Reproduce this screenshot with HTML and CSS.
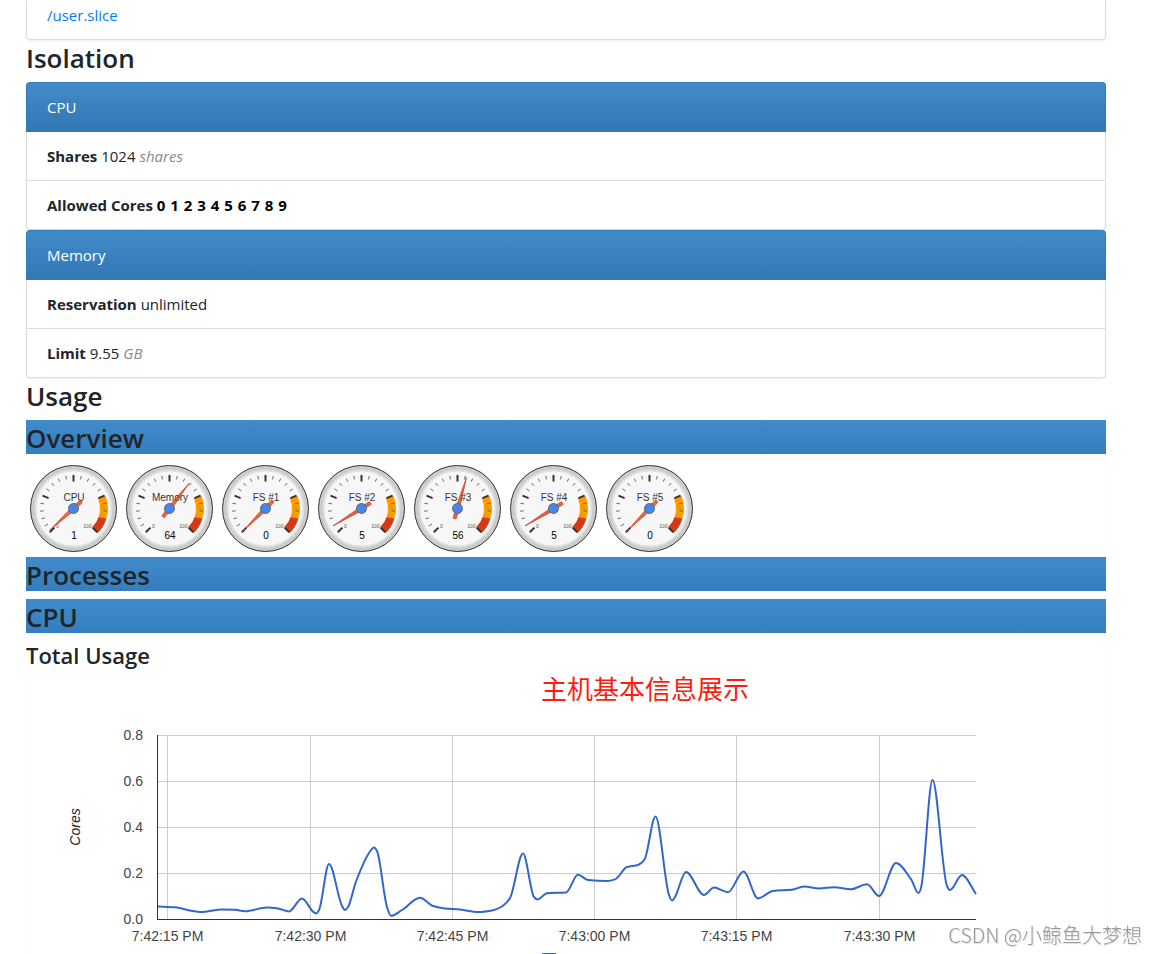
FILE: index.html
```html
<!DOCTYPE html>
<html lang="en">
<head>
<meta charset="utf-8">
<title>Container usage</title>
<link rel="stylesheet" href="styles.css">
</head>
<body>
<main class="page">
  <div class="panel panel-tail"><div class="item"><a href="#">/user.slice</a></div></div>

  <h2 class="title">Isolation</h2>
  <section class="panel">
    <div class="panel-head">CPU</div>
    <div class="item"><b>Shares</b> 1024 <i class="unit">shares</i></div>
    <div class="item"><b>Allowed Cores</b> <b class="cores"><span>0</span> <span>1</span> <span>2</span> <span>3</span> <span>4</span> <span>5</span> <span>6</span> <span>7</span> <span>8</span> <span>9</span></b></div>
  </section>
  <section class="panel">
    <div class="panel-head">Memory</div>
    <div class="item"><b>Reservation</b> unlimited</div>
    <div class="item"><b>Limit</b> 9.55 <i class="unit">GB</i></div>
  </section>

  <h2 class="title">Usage</h2>
  <section class="block">
    <h2 class="title bar">Overview</h2>
    <div class="gauges" id="gauges"></div>
  </section>
  <section class="block"><h2 class="title bar">Processes</h2></section>
  <section class="block">
    <h2 class="title bar">CPU</h2>
    <h3 class="subtitle">Total Usage</h3>
    <div class="chart-wrap">
      <svg class="chart" id="chart" viewBox="0 0 1080 276" role="img" aria-label="Total CPU usage in cores"></svg>
      <p class="note">主机基本信息展示</p>
    </div>
  </section>
</main>
<div class="watermark">CSDN @小鲸鱼大梦想</div>
<script src="app.js"></script>
</body>
</html>
```
FILE: styles.css
```css
* { box-sizing: border-box; }

body {
  margin: 0;
  background: #fff;
  color: #212529;
  font: 15px/24px "Open Sans", "Noto Sans", sans-serif;
}

.page { padding: 0 51px 0 26px; }

a { color: #007bff; text-decoration: none; }

.panel {
  border-radius: 4px;
  box-shadow: 0 1px 2px rgba(0, 0, 0, .08);
}

.panel-head {
  padding: 12px 20px;
  border: 1px solid #337ab7;
  border-bottom-color: #3278b3;
  border-radius: 4px 4px 0 0;
  background: linear-gradient(#428bca, #3278b3);
  color: #fff;
}

.item {
  padding: 12px 20px;
  border: solid #ddd;
  border-width: 0 1px 1px;
}

.item:last-child { border-radius: 0 0 4px 4px; }

.panel-tail .item { padding: 3px 20px 12px; }

.unit { color: #888; }
.cores { color: #000; }
.cores span { margin-right: 1px; }

.title, .subtitle { margin: 0 0 8px; font-weight: 600; }
.title { padding-top: 2px; font-size: 26px; line-height: 32px; }
.subtitle { font-size: 22px; line-height: 29px; }

.bar { background: linear-gradient(#428bca, #357ebd); }

.block { box-shadow: 0 0 1px rgba(0, 0, 0, .08); }

.gauges { display: flex; flex-wrap: wrap; }
.gauge { width: 96px; height: 95px; }
.gauge text { font-family: "Liberation Sans", Arial, sans-serif; text-anchor: middle; }
.rim { fill: #ccc; stroke: #333; }
.bezel { fill: #f7f7f7; stroke: #e0e0e0; stroke-width: 2; }
.warn { fill: none; stroke: #ff9900; stroke-width: 8; }
.crit { fill: none; stroke: #dc3912; stroke-width: 8; }
.major { stroke: #333; stroke-width: 2; }
.minor { stroke: #666; }
.name { fill: #333; font-size: 10px; }
.value { fill: #000; font-size: 10px; }
.limit { fill: #555; font-size: 5px; }
.needle { fill: #dc3912; fill-opacity: .75; stroke: #c63310; stroke-width: .6; }
.hub { fill: #4684ee; stroke: #666; }

.chart-wrap { position: relative; }
.chart { display: block; width: 100%; overflow: hidden; }
.chart text { fill: #444; font: 14px "Liberation Sans", Arial, sans-serif; }
.chart .axis-name { fill: #222; font-style: italic; text-anchor: middle; }
.chart .x-label { text-anchor: middle; }
.chart .y-label { text-anchor: end; }
.grid { stroke: #ccc; }
.axis { stroke: #333; }
.series { fill: none; stroke: #3366cc; stroke-width: 2; }

.note {
  position: absolute;
  top: -10px;
  left: 515px;
  margin: 0;
  color: #fe1b0f;
  font: 26px/40px "Noto Sans CJK SC", sans-serif;
}

.watermark {
  position: fixed;
  right: 15px;
  bottom: 4px;
  color: #999;
  font: 300 20px/30px "Noto Sans CJK SC", sans-serif;
  text-shadow: 1px 1px 1px #ddd;
}
```
FILE: app.js
```js
const NS = 'http://www.w3.org/2000/svg';

function add(parent, tag, attrs, text) {
  const el = document.createElementNS(NS, tag);
  for (const key in attrs) el.setAttribute(key, attrs[key]);
  if (text !== undefined) el.textContent = text;
  parent.appendChild(el);
  return el;
}

/* Point on a dial for a 0-100 value; the scale sweeps 270 degrees. */
function polar(value, r) {
  const a = (value * 2.7 - 135) * Math.PI / 180;
  return [r * Math.sin(a), -r * Math.cos(a)];
}

function band(g, from, to, cls) {
  add(g, 'path', { class: cls, d: `M${polar(from, 30.5)} A30.5 30.5 0 0 1 ${polar(to, 30.5)}` });
}

function gauge(name, value) {
  const svg = add(document.getElementById('gauges'), 'svg', { class: 'gauge', viewBox: '-47.5 -46.5 96 95' });
  add(svg, 'circle', { class: 'rim', r: 43 });
  add(svg, 'circle', { class: 'bezel', r: 38 });
  band(svg, 75, 90, 'warn');
  band(svg, 90, 100, 'crit');
  for (let i = 0; i <= 20; i++) {
    const major = i % 5 === 0;
    const [x1, y1] = polar(i * 5, major ? 27 : 30);
    const [x2, y2] = polar(i * 5, 33.5);
    add(svg, 'line', { class: major ? 'major' : 'minor', x1, y1, x2, y2 });
  }
  add(svg, 'text', { class: 'name', x: 0.5, y: -7.5 }, name);
  if (value > 0) add(svg, 'text', { class: 'limit', x: -16, y: 19.5 }, '0');
  add(svg, 'text', { class: 'limit', x: 14, y: 19.5 }, '100');
  add(svg, 'text', { class: 'value', x: 0.5, y: 30.5 }, value);
  add(svg, 'path', { class: 'needle', d: 'M0 -32 L2 0 L1.5 10.5 L-1.5 10.5 L-2 0 Z', transform: `rotate(${value * 2.7 - 135})` });
  add(svg, 'circle', { class: 'hub', r: 5 });
}

[['CPU', 1], ['Memory', 64], ['FS #1', 0], ['FS #2', 5], ['FS #3', 56], ['FS #4', 5], ['FS #5', 0]]
  .forEach(([name, value]) => gauge(name, value));

/* Samples: x offset in the plot, height above the baseline. */
const samples = [
  [0, 12.5], [17, 11.7], [32, 8.5], [43, 7], [64, 9.6], [77, 9.2], [87, 7.8], [109, 11.5], [120, 10.5],
  [131, 7.6], [144, 20.6], [155, 7.4], [158, 5.6], [161, 9], [171, 55], [184, 13], [187, 9], [190, 12],
  [198, 37.5], [211, 66], [216, 71.5], [219, 68], [229, 12], [233, 3.2], [244, 9],
  [262, 21.2], [275, 13], [287, 10.5], [302, 9.5], [320, 7], [334, 8.5], [344, 12.5], [352, 21], [365, 65.5],
  [376, 22], [379.5, 19.5], [389, 25.8], [408, 26.6], [420, 44.3], [430, 39], [449, 38], [457, 39.6], [469, 52],
  [480, 54], [486.5, 59.5], [497.5, 102.5], [511, 24], [514, 18.4], [517, 22], [528, 47], [546, 24], [556, 31.5], [570, 26.8],
  [585.5, 47.4], [600, 20.6], [615, 28], [634, 29.2], [646, 32.6], [661, 30.6], [676, 31.8], [693, 29.8],
  [709, 34.7], [721, 23], [738, 56], [753, 39.8], [760.5, 26], [763, 31], [774.5, 139], [789, 33], [792, 29], [804, 44], [818, 25]
];

/* Monotone cubic interpolation through the samples. */
function curve(pts) {
  const n = pts.length;
  const s = [];
  for (let i = 0; i < n - 1; i++) s.push((pts[i + 1][1] - pts[i][1]) / (pts[i + 1][0] - pts[i][0]));
  const m = pts.map((p, i) => {
    if (i === 0) return s[0];
    if (i === n - 1) return s[n - 2];
    const a = s[i - 1], b = s[i];
    return a * b <= 0 ? 0 : 2 * a * b / (a + b);
  });
  let d = `M${pts[0]}`;
  for (let i = 0; i < n - 1; i++) {
    const [x0, y0] = pts[i], [x1, y1] = pts[i + 1], h = (x1 - x0) / 3;
    d += ` C${x0 + h} ${y0 + m[i] * h} ${x1 - h} ${y1 - m[i + 1] * h} ${x1} ${y1}`;
  }
  return d;
}

const chart = document.getElementById('chart');
const plot = add(chart, 'g', { transform: 'translate(131 57)' });
['0.8', '0.6', '0.4', '0.2', '0.0'].forEach((label, i) => {
  const y = i * 46 + 0.5;
  add(plot, 'line', { class: 'grid', x1: 0, x2: 819, y1: y, y2: y });
  add(plot, 'text', { class: 'y-label', x: -14, y: y + 4.5 }, label);
});
['7:42:15', '7:42:30', '7:42:45', '7:43:00', '7:43:15', '7:43:30'].forEach((time, i) => {
  const x = Math.round(10.4 + i * 142.25) + 0.5;
  add(plot, 'line', { class: 'grid', x1: x, x2: x, y1: 0, y2: 184 });
  add(plot, 'text', { class: 'x-label', x, y: 206 }, time + ' PM');
});
add(plot, 'line', { class: 'axis', x1: 0.5, x2: 0.5, y1: 0, y2: 185 });
add(plot, 'line', { class: 'axis', x1: 0, x2: 819, y1: 184.5, y2: 184.5 });
add(plot, 'path', { class: 'series', d: curve(samples.map(([x, v]) => [x + 1, 184 - v])) });
add(chart, 'text', { class: 'axis-name', transform: 'translate(54 149) rotate(-90)' }, 'Cores');
add(chart, 'line', { class: 'series', x1: 516, x2: 530, y1: 276, y2: 276 });
```
